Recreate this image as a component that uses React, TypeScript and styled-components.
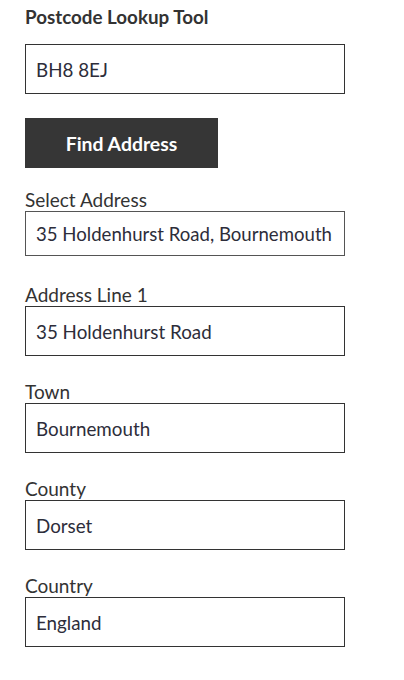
import styled, { createGlobalStyle } from "styled-components"

const GlobalStyle = createGlobalStyle`
  body {
    margin: 0;
    background: #fff;
    font-family: Lato, "Liberation Sans", sans-serif;
    color: #333;
  }
`

const fields = [
  { label: "Address Line 1", value: "35 Holdenhurst Road" },
  { label: "Town", value: "Bournemouth" },
  { label: "County", value: "Dorset" },
  { label: "Country", value: "England" },
]

const App = () => {
  return (
    <>
      <GlobalStyle />
      <Wrapper>
        <Title>Postcode Lookup Tool</Title>
        <TextInput defaultValue="BH8 8EJ" />
        <FindButton type="button">Find Address</FindButton>

        <Field $top={20}>
          <Label>Select Address</Label>
          <AddressSelect defaultValue="35">
            <option value="35">35 Holdenhurst Road, Bournemouth</option>
          </AddressSelect>
        </Field>

        {fields.map((field, i) => (
          <Field key={field.label} $top={i === 0 ? 27 : 24}>
            <Label>{field.label}</Label>
            <TextInput defaultValue={field.value} />
          </Field>
        ))}
      </Wrapper>
    </>
  )
}

const Wrapper = styled.div`
  display: flex;
  flex-direction: column;
  align-items: flex-start;
  padding: 6px 25px 30px;
`

const Title = styled.h1`
  margin: 0 0 16px;
  font-size: 18.8px;
  line-height: 22px;
  font-weight: 700;
  color: #333;
`

const TextInput = styled.input`
  box-sizing: border-box;
  width: 320px;
  height: 50px;
  margin: 0;
  padding: 0 10px;
  border: 1px solid #333;
  border-radius: 0;
  background: #fff;
  font-family: Lato, "Liberation Sans", sans-serif;
  font-size: 18.8px;
  color: #2d2d3a;
  outline: none;
`

const FindButton = styled.button`
  width: 193px;
  height: 50px;
  margin-top: 24px;
  border: none;
  border-radius: 0;
  background: #363636;
  color: #fff;
  font-family: Lato, "Liberation Sans", sans-serif;
  font-size: 19.4px;
  font-weight: 700;
  cursor: pointer;
`

const Field = styled.div<{ $top: number }>`
  display: flex;
  flex-direction: column;
  margin-top: ${(p) => p.$top}px;
`

const Label = styled.label`
  font-size: 19px;
  line-height: 23px;
  color: #333;
`

const AddressSelect = styled.select`
  box-sizing: border-box;
  width: 320px;
  height: 45px;
  margin: 0;
  padding: 0 8px 0 10px;
  border: 1px solid #555;
  border-radius: 0;
  background: #fff;
  font-family: Lato, "Liberation Sans", sans-serif;
  font-size: 18.6px;
  color: #2d2d3a;
  appearance: none;
  outline: none;
`

export default App
